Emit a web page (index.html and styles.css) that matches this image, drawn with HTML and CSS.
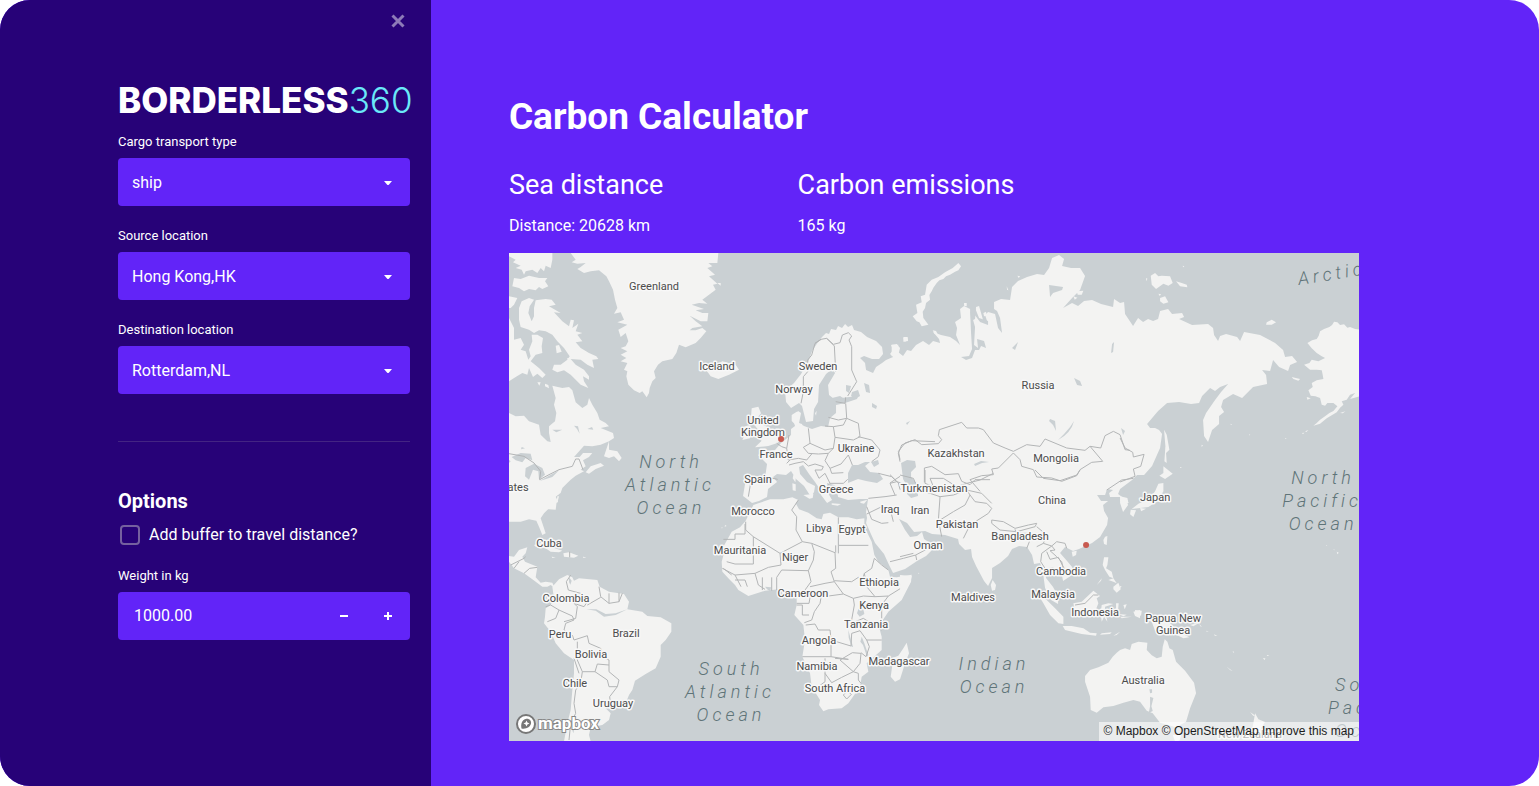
FILE: index.html
```html
<!DOCTYPE html>
<html lang="en">
<head>
<meta charset="utf-8">
<meta name="viewport" content="width=device-width, initial-scale=1">
<title>Carbon Calculator</title>
<link rel="stylesheet" href="styles.css">
</head>
<body>
<div class="app">
  <aside class="sidebar">
    <button class="close" type="button" aria-label="Close sidebar">
      <svg width="14" height="14" viewBox="0 0 14 14"><path d="M1.500 1.500L12.500 12.500M12.500 1.500L1.500 12.500"/></svg>
    </button>
    <div class="logo">BORDERLESS<span class="logo-number">360</span></div>
    <form class="form">
      <div class="field">
        <label for="transport">Cargo transport type</label>
        <div class="select">
          <select id="transport"><option>ship</option></select>
          <svg class="caret" width="8" height="4" viewBox="0 0 8 4"><path d="M0 0H8L5 3.4Q4 4.4 3 3.4Z"/></svg>
        </div>
      </div>
      <div class="field">
        <label for="source">Source location</label>
        <div class="select">
          <select id="source"><option>Hong Kong,HK</option></select>
          <svg class="caret" width="8" height="4" viewBox="0 0 8 4"><path d="M0 0H8L5 3.4Q4 4.4 3 3.4Z"/></svg>
        </div>
      </div>
      <div class="field">
        <label for="destination">Destination location</label>
        <div class="select">
          <select id="destination"><option>Rotterdam,NL</option></select>
          <svg class="caret" width="8" height="4" viewBox="0 0 8 4"><path d="M0 0H8L5 3.4Q4 4.4 3 3.4Z"/></svg>
        </div>
      </div>
      <hr class="divider">
      <h2 class="options-title">Options</h2>
      <div class="check">
        <input type="checkbox" id="buffer">
        <label for="buffer">Add buffer to travel distance?</label>
      </div>
      <div class="field">
        <label for="weight">Weight in kg</label>
        <div class="number">
          <input type="number" id="weight" value="1000.00" step="0.01">
          <button type="button" aria-label="Decrease"><svg width="8" height="8" viewBox="0 0 8 8"><path d="M0 4H8"/></svg></button>
          <button type="button" aria-label="Increase"><svg width="8" height="8" viewBox="0 0 8 8"><path d="M0 4H8M4 0V8"/></svg></button>
        </div>
      </div>
    </form>
  </aside>

  <main class="main">
    <h1 class="title">Carbon Calculator</h1>
    <div class="metrics">
      <section><h2>Sea distance</h2><p>Distance: 20628 km</p></section>
      <section><h2>Carbon emissions</h2><p>165 kg</p></section>
    </div>
    <div class="map">
      <svg class="world" viewBox="0 0 850 488" role="img" aria-label="World map with the ports of Rotterdam and Hong Kong">
        <!-- Eurasia and Arabia -->
        <path class="land" d="M313 84L317 80 320 81 322 76 327 77 329 73 333 75 336 71 339 74 343 72 345 77 352 79 358 84 367 88 373 94 374 101 370 106 363 106 355 103 351 105 356 110 357 117 364 120 367 114 373 110 377 107 384 104 381 101 384 97 382 92 388 91 389 99 394 103 398 97 402 98 407 92 414 88 420 92 424 88 431 90 430 86 424 79 432 82 441 84 447 88 451 92 447 82 448 75 446 69 452 65 451 56 455 53 461 56 462 68 466 66 467 54 470 53 474 67 479 71 476 62 479 59 486 61 489 75 493 80 491 65 488 58 485 56 485 49 492 46 501 47 503 34 509 28 518 24 528 21 535 22 540 15 543 5 550 2 555 6 553 13 562 15 571 15 576 23 571 37 563 45 554 55 563 50 569 53 575 48 583 47 592 51 604 54 605 46 611 50 615 49 616 61 624 73 629 65 634 69 639 66 644 68 649 66 651 58 659 56 663 61 673 60 675 64 670 66 683 72 699 71 704 75 705 82 709 88 711 83 717 81 728 84 731 88 735 79 751 82 766 90 774 97 776 104 783 103 788 109 781 112 779 118 770 114 764 107 761 118 753 117 757 122 758 131 744 134 733 145 724 141 714 147 712 154 715 159 710 163 710 171 703 177 699 189 695 183 694 167 697 160 706 147 712 139 719 131 711 134 706 138 701 135 693 143 690 150 682 151 670 149 658 150 649 158 638 171 641 175 646 175 650 177 653 181 651 195 643 213 635 222 628 222 623 227 611 236 609 241 617 247 619 252 614 259 611 250 611 244 601 244 600 240 604 237 598 236 596 242 588 242 592 248 599 248 594 252 595 258 599 265 598 272 591 284 583 290 570 296 564 298 556 294 551 300 558 308 563 314 563 322 554 328 553 323 547 321 544 314 540 315 536 317 537 325 544 334 549 343 549 351 542 347 536 335 534 320 531 310 525 311 523 302 518 294 510 293 503 296 499 303 491 310 483 315 483 325 479 333 475 328 467 313 463 304 462 296 456 297 450 291 449 286 436 282 423 281 416 278 405 279 398 270 390 266 396 277 401 284 408 283 413 279 415 286 424 292 424 296 417 303 408 308 396 316 384 320 380 312 375 301 366 290 361 279 357 270 358 265 357 259 359 246 351 246 339 247 329 244 328 235 325 232 318 230 319 240 323 247 318 250 312 242 310 235 306 229 300 221 294 212 290 214 291 221 298 229 306 233 305 239 302 244 295 233 287 226 282 218 277 222 268 221 264 224 268 229 259 236 258 244 250 248 243 250 238 246 234 243 237 225 246 223 256 225 258 211 249 202 256 198 266 197 272 190 282 182 282 176 286 173 283 164 289 158 292 160 290 170 295 173 303 176 312 173 319 174 321 165 327 160 327 152 336 150 348 146 349 143 332 145 325 146 320 142 319 132 326 120 323 116 317 121 310 132 309 149 305 156 304 168 297 169 293 153 290 150 282 155 277 149 276 138 285 130 292 121 299 109 303 98 309 89Z"/>
        <g transform="translate(206 237) scale(.3333)">
          <path class="land" d="M92 92L115 45 130 40 165 28 205 28 232 22 250 30 242 40 252 58 280 68 305 85 320 88 325 72 345 68 370 82 400 82 425 88 448 85 448 110 470 155 478 195 490 215 520 240 525 260 545 262 590 254 588 275 560 330 520 365 500 395 492 410 500 440 500 480 455 520 460 545 440 560 435 590 400 640 380 655 340 658 325 664 312 645 315 630 290 590 285 550 262 500 270 450 265 405 238 375 245 345 245 320 225 322 205 300 190 298 150 302 100 318 70 300 60 285 45 270 22 245 20 215 28 185 25 170 50 125 75 112Z"/>
          <path class="land" d="M575 458L582 490 570 520 555 568 540 575 527 560 532 525 530 505 550 497 565 475ZM30 105l5 3-6 2zM20 112l4 2-5 1z"/>
          <path class="water" d="M430 357l14-3 4 18-14 8-8-10zM400 420l8 30 6 20-4 1-9-28zM440 440l8 20 12 35-4 5-12-35-8-10zM150 290l18 2-2 12-10-6z"/>
          <path class="border" d="M250 30L230 60 245 80 243 120 262 155 195 190 115 140 92 120 92 95M60 132H90V102M60 132V148H25M115 140V222H60L35 215M195 190L198 225 160 232 120 250 60 255 22 235M262 155L290 160 298 185 295 210 280 242 200 240 185 262M290 160L360 188 362 235 348 245 358 275 330 280 285 290M370 82V166H460M362 188V166M370 190V166M478 205L470 235 448 250 442 270 430 262 410 275 358 272M478 205L500 225 520 240M448 250L455 290 480 320 520 318 565 290 525 262M520 318L500 345 500 385M358 275L385 312 415 325 445 318 480 320M415 325L418 345 408 400 445 385 500 420M385 312L340 318 318 322 315 340 298 365 290 390 268 398M245 340H282L285 322 270 300 288 275 280 242M245 345L262 345V375L282 375M272 405L300 402 310 420 345 420 348 450 408 468 410 430 435 422 455 450H500M348 450V500L262 500M348 500L400 508 360 505M330 505V575L310 590M330 550L350 578 380 562 415 545 435 520 438 490 412 488 375 510 415 545 430 550 430 570 438 580M385 615l12-12 12 10-14 14zM455 450l8 20-10 30-15-12M120 250L130 285 150 298M142 262V300M170 262V302M185 262V300M60 255L78 290M25 235L50 255M97 290L90 270 60 270M525 215L565 205 602 195 605 210M455 50L470 88 500 100 520 98M455 72L500 50 525 55 535 95M602 195L640 175 655 175"/>
        </g>
        <!-- European and Asian lakes and inland seas -->
        <path class="water" d="M339 220L343 212 349 212 356 209 361 209 356 213 361 219 370 220 374 226 368 230 357 228 349 226 339 230ZM362 209l7-2 1 4-5 3zM392 210L398 207 406 208 407 214 402 219 402 224 408 231 409 243 402 245 398 241 398 233 394 226ZM343 139l6-2 2 6-5 3-4-3zM355 130l5 2 1 8-4-1zM363 150l5 3-1 3-4-2zM337 132l5 1-2 7-3-2zM461 56L466 74 465 92 469 95 468 86 475 88 477 95 472 93 470 97 466 97 463 105 457 107 452 104 460 103 463 96 462 80zM466 55l4 10 9 3 0 4-8-3-6-8zM549 187Q562 180 565 168L561 174 555 181ZM541 166l5 2 1 10-3-6-4-4zM565 125l6 3 2 5-5-1zM503 95l6-6-3 8zM465 211l7-3 8 1-7 1-7 3zM540 32l14 2-1 3-9 3-3 4zM603 91l2-2-1 10-2 1zM612 175l4 3-2 4zM397 170l4-2-3 4zM323 145l8-2 3 2-8 3z"/>
        <g transform="translate(206 57) scale(.3333)">
          <path class="land" d="M110 295L130 290 138 310 128 322 150 325 145 345 165 355 180 375 200 390 185 400 160 408 120 412 140 392 125 385 138 370 118 345 108 320ZM85 350L105 345 110 365 105 385 82 390 90 372ZM235 495l8 2-2 20-8-12zM232 520l10 3v20l-9-2zM265 555l30-3-2 12-10 2zM230 315l15-10 5 8-15 10 5 20-10-10zM250 340l12 2-4 10-8-4zM300 310l5-8-2 15zM350 580l28 2-10 5-18-3zM435 575l22-6-10 12-10-2zM540 112l10-4 5 6-5 20-10 10zM565 85l12-4 2 10-10 4z"/>
          <path class="border" d="M300 100L318 88 335 85 355 103 375 98 382 75 400 68 410 78 402 90 410 110 410 180 425 215 398 258M318 88L300 100 290 135 278 150 278 185 265 200 265 245 258 280M335 85L358 108 362 185M362 275L390 280 392 262M392 280L395 325 370 330 340 322M395 325L430 340 435 380 415 390 360 382 355 350 385 345 395 325M355 350L330 348M360 382L355 415 330 420 285 400 280 355M285 400L265 412 280 430 310 432 340 430 355 415M222 375L215 415 200 410 185 400M215 415L220 450 250 445 275 450 290 432M222 465L240 460 265 455 280 468 300 462 325 470M430 380L470 390 495 420 490 440 470 455M340 430L330 452 345 475 378 462 400 435 412 465M345 475L350 490 385 488M325 470L320 480 300 480 312 505 330 490M330 490L345 520 385 520 398 508M345 520L330 535M490 490L530 500 545 515 525 520 540 555M545 515L560 520M90 505L108 512 100 560M150 500L188 508M230 445L215 460M460 565L510 560 545 555M555 455L550 430 560 405 590 392 660 395"/>
        </g>
        <!-- Central Asia and Siberian islands -->
        <g transform="translate(381 0) scale(.3333)">
          <path class="land" d="M205 30L213 40 205 52 195 56 180 65 168 70 160 78 148 82 140 90 130 104 125 115 118 126 120 140 108 150 105 165 98 176 100 195 115 215 95 220 88 208 80 205 68 190 82 180 78 155 95 148 92 130 105 125 110 95 125 80 145 72 165 58 188 45ZM40 252l12 0 2 12-14 2zM128 232l10 2 5 10-10-2zM222 150l8 0 0 10-8-2zM5 275l20 0-5 30-15 5zM280 180l8-4 2 12-8 2zM382 68l8 2-4 5zM560 115l20-2-5 12-12 0zM550 130l12 4-8 6zM350 100l5 12-4-2z"/>
          <path class="border" d="M30 620L25 595 45 570 75 560 95 575 145 572 155 560 145 548 148 530 215 508 230 525 265 525 280 530 310 570 345 585 370 595M370 595L410 575 450 580 465 558 530 585 585 592 600 580 638 625 605 628 570 650 560 668 515 685 485 675 440 672 430 650 395 640 390 620 370 600 325 645 305 648 310 665 275 668 240 680M600 580L632 585 645 548 670 535 690 545 705 590 720 592M103 688V645L125 640 165 665 205 662 215 685 240 695 255 680 300 680M0 690L30 670M0 665L25 690 30 710M240 680L270 715"/>
        </g>
        <!-- South and Southeast Asia -->
        <g transform="translate(391 217) scale(.3333)">
          <path class="land" d="M278 330L288 345 285 360 276 362 272 345ZM615 200L622 198 620 225 612 222 610 210ZM515 245L530 242 528 255 518 260ZM612 262L625 262 622 285 618 295 635 305 640 325 628 320 615 300 608 285ZM590 345L605 325 603 332ZM625 330L640 325 650 340 640 335ZM640 350L655 338 662 358 650 368 640 358ZM418 380L440 390 465 415 490 440 490 462 475 460 450 435 430 400ZM488 468L515 468 550 475 570 488 590 490 588 497 545 492 495 480ZM520 400L545 395 580 362 600 378 590 385 595 400 585 425 575 440 545 435 525 430ZM605 405L625 400 640 402 615 410 615 425 630 430 618 435 622 455 612 440 605 455 602 430ZM605 490L635 487 630 492 600 494ZM640 497L660 485 650 495ZM648 400l8 0-2 20-6-4zM700 425L720 420V445L705 438ZM655 432l25 2-10 5zM55 308l3 2-3 2zM0 315L35 318 30 340 0 385Z"/>
          <path class="border" d="M405 0L430 25 480 32 530 15 540 0M75 0V40L100 50 90 25 130 25 170 50 200 40 240 30 280 10M55 60L90 70 120 80 115 150 125 200M120 80L160 75 200 60 210 75 195 105 160 125 120 150M210 75L225 95 260 100 275 115 265 130 210 165 190 205M200 60L245 70 275 100M275 150L310 155 345 175 385 165 410 160 405 170 350 185 300 180 275 160ZM345 178L350 195 345 215M410 170L440 195 430 220 410 230M350 190L380 190 388 215 380 235M430 220L455 228 470 215 495 220 500 235M455 228L465 240 450 242 470 260 485 275 490 300M455 228L425 250 422 275 435 295M440 245L450 268 475 262 495 300 480 310M525 405L555 400 580 375 595 375M0 15L40 25 55 60M620 60L665 30 700 25M0 260L40 250"/>
        </g>
        <!-- Northeast Asia, Alaska and the North Pacific -->
        <g transform="translate(611 0) scale(.3333)">
          <path class="land" d="M92 68L105 60 115 70 125 68 150 70 158 90 145 98 130 92 108 108 95 95ZM168 85L185 90 200 95 202 103 180 100ZM120 135L135 130 145 148 130 152 120 145ZM115 122l8 2-4 5zM78 75l4 2-3 8zM440 208L455 200 468 208 455 215 438 215ZM188 38l5 2-4 3zM515 372L540 378 535 383 520 378ZM132 530L140 545 148 590 138 600 140 630 133 625 136 580ZM130 640L158 662 135 678 118 668 130 660ZM115 692L130 690 130 715 112 745 85 762 60 765 35 768 55 752 90 735 105 715ZM32 770l16 2-8 20-10-8zM60 765l18 2-15 8zM0 730L22 735 25 750 5 758ZM245 575l4 3-5 3zM332 512l4 3-4 1zM387 544l4 2-4 1z"/>
          <path class="land" d="M720 230L705 228 690 222 682 224 672 214 660 216 652 208 642 206 636 216 628 222 612 228 600 235 596 248 590 258 576 262 562 270 575 286 590 300 605 310 615 315 595 325 575 320 568 330 552 335 570 350 590 350 605 352 608 366 610 378 590 382 575 390 578 402 565 412 572 428 586 430 600 435 605 455 615 458 622 450 640 450 652 460 640 474 628 480 615 490 600 500 590 510 580 518 600 512 620 496 650 478 660 464 670 455 665 445 680 440 690 425 705 420 690 438 720 430ZM560 432l12 4-10 4zM555 535l10-4-6 6zM545 540l8-1-4 4zM660 480l16-5-8 6zM495 555l5 1-4 2zM180 642l6 1-6 2z"/>
          <path class="border" d="M0 555L15 585 38 598 40 612 72 604 62 640 40 648 45 670 0 687"/>
        </g>
        <!-- Oceania -->
        <g transform="translate(611 247) scale(.3333)">
          <path class="land" d="M0 450L15 445 30 450 35 432 55 425 82 428 80 450 95 466 110 475 125 470 128 440 134 418 142 425 148 445 158 450 168 485 195 512 222 548 228 580 210 625 198 665 168 682 120 668 98 640 80 632 60 605 40 600 10 608-20 618-50 622-70 638-88 630-90 590-105 545-105 528-90 510-65 502-35 488-22 470-10 458ZM158 705L185 702 178 722 165 724ZM405 640l10 18 20 8-15 24-12 30-40-5 30-35zM390 636l14 10-4 2zM80 345L110 350 150 370 175 395 208 412 190 415 150 395 105 392 95 365 75 358ZM45 330l20 2-2 15-18-4zM10 315l10-2-6 15zM0 350l35 0-30 5zM210 375l30-8-20 12zM238 372l8 10-6-4zM320 500l18 14-8-4zM428 475l8 0-2 5zM440 465l8 0-6 3zM650 155l6 3-4 5zM640 148l4 1-2 2zM258 392l8 3-6 0zM282 403l10 5-8-1zM338 454l5 2-4 2zM0 0L22 0 25 8 5 10ZM0 258l4 0-2 8zM618 136l4 2-4 0z"/>
          <path class="water" d="M88 568l8 0 0 10-6 2zM90 590l10 4-6 25 4 14-12 6 4-20z"/>
        </g>
        <!-- North America and Greenland -->
        <g transform="scale(.3333)">
          <path class="land" d="M185 0L200 20 188 28 205 32 230 30 215 42 205 48 225 60 245 55 270 52 292 70 300 85 312 110 318 140 325 165 315 182 335 178 345 200 325 208 355 215 328 230 335 252 350 240 358 265 350 280 335 285 355 295 335 305 352 315 335 325 355 330 345 350 355 355 352 370 358 395 375 412 392 420 400 415 413 433 420 420 422 405 430 385 440 375 435 355 447 335 460 325 490 318 502 300 510 275 530 283 560 270 575 255 592 235 580 225 560 232 542 232 550 225 580 220 560 205 542 188 575 205 595 205 598 180 580 180 560 172 585 168 548 155 570 150 595 152 580 140 600 125 620 110 612 95 625 92 600 70 618 65 595 45 610 40 598 30 625 30 628 0ZM0 0H130V20L125 45 110 38 105 55 95 45 85 60 70 50 50 55 45 65 38 50 20 45 35 38 12 28 20 20 0 10ZM15 75L35 78 60 68 90 75 115 75 108 85 118 100 100 108 90 102 80 112 60 108 45 115 30 105 10 100ZM0 130L25 135 15 155 5 165 0 165ZM625 90h10v8zM598 360L585 345 600 350 590 335 615 340 640 325 680 335 690 350 660 365 628 378 605 370Z"/>
          <path class="land" d="M38 145L60 135 75 140 62 160 58 180 68 205 75 190 75 165 80 142 110 138 128 140 140 155 120 160 155 180 135 178 160 205 180 220 185 200 195 202 190 225 208 212 200 235 220 240 205 245 220 265 200 268 215 285 240 300 262 310 268 318 250 320 255 345 235 335 215 320 185 318 200 335 225 350 240 370 240 380 222 370 225 385 238 405 215 395 200 380 185 365 165 352 145 358 130 350 135 335 155 335 175 320 182 310 165 285 145 265 130 245 110 235 90 232 75 240 60 230 35 222 30 200 30 165ZM0 195L15 225 15 260 35 255 45 275 35 290 50 295 58 320 65 310 60 290 70 265 68 245 85 245 102 255 98 280 100 300 80 305 65 325 90 345 110 365 100 375 85 362 72 372 60 345 55 365 40 360 20 372 0 385ZM140 278l10-2 8 20-15 5zM175 315l8 0 2 10-10 2zM85 388l10 0-4 10zM108 392l10 4 2 10-12-6z"/>
          <path class="land" d="M130 398L160 405 180 402 190 412 195 430 200 448 220 465 235 455 240 435 250 455 265 480 272 500 290 510 300 520 275 525 312 540 315 555 300 565 275 575 250 580 225 578 195 612 212 612 222 600 250 600 240 612 222 622 230 640 215 650 225 655 200 668 185 680 175 690 160 705 155 720 140 730 145 750 150 730H145L140 770 0 760V480L20 490 45 488 60 505 90 515 95 545 115 565 125 567 120 540 120 520 138 505 142 480 135 455 140 435ZM300 565L300 590 325 595 338 615 330 625 315 610 300 615 285 610 290 595ZM230 658L245 640 275 630 285 638 260 648 240 662Z"/>
          <path class="water" d="M8 612L35 600 65 602 70 622 50 615 40 628 20 622ZM50 645L75 632 100 645 108 665 90 680 88 655 72 650 60 680 48 670ZM92 684L120 668 150 652 130 672ZM38 582l10 4-12 3zM130 530l30 0-18 8zM195 518l12 2 5 22-8-14zM235 528l14-6 4 8zM0 620l5 5-5 5z"/>
          <path class="border" d="M0 602L45 610 75 630 95 655 92 680 120 665 150 650 190 640 200 618 210 618 222 650"/>
        </g>
        <!-- Central and South America -->
        <g transform="translate(0 237) scale(.3333)">
          <path class="land" d="M0 -20H145L150 12 140 20 147 35 125 50 105 70 95 85 105 115 110 130 100 135 90 110 82 92 60 88 35 95 0 95ZM0 198L15 200 30 180 55 172 50 190 40 200 48 215 85 230 80 262 95 278 110 275 130 278 138 295 125 285 115 290 100 290 70 268 45 250 15 235 0 215ZM75 165L100 158 130 172 160 182 150 187 125 185 110 175 80 170ZM163 190L180 187 208 197 195 203 165 200ZM128 200l12 2-10 2zM222 200l10 2-9 2z"/>
          <path class="land" d="M130 290L150 268 175 255 190 262 195 272 210 265 265 270 272 290 300 305 345 312 360 335 355 358 400 365 415 378 455 382 487 400 487 425 470 450 455 465 455 500 440 535 410 552 378 572 370 600 360 615 350 640 335 655 300 650 290 655 305 670 300 690 280 705 245 712 240 735 245 754H165L175 700 185 660 190 600 195 550 195 510 165 490 140 460 125 425 105 400 108 380 110 355 125 345 135 325Z"/>
          <path class="water" d="M180 262l8 10-4 12-4-8zM232 358L260 362 285 380 320 375 355 358 320 370 290 372 262 358zM258 202l3 1-2 1zM188 715l8 0-3 15z"/>
          <path class="border" d="M185 255L172 275 178 300 215 310 235 335 225 350 195 340 205 350 200 385 165 395M110 350L125 345 150 360 140 385 115 395M150 360L190 378 195 390 170 400 165 420 185 435M270 290L275 320 300 340 330 335 340 310M300 310L300 340M330 308L330 335M235 345L275 322M190 435L195 450 235 437 240 460 275 475 280 500 300 510V525L265 522 258 545 220 545 205 510 205 455M258 545L295 570 300 590 325 590 330 570 300 545 300 525M325 590L302 620 305 650M220 545L215 580 200 600 195 640 200 670 185 700 180 750M5 225L45 205 50 200M15 235L30 215M45 250L62 235 85 232M195 505L210 550M182 185V202"/>
        </g>

        <g class="country">
          <text x="145" y="37">Greenland</text><text x="208" y="117">Iceland</text>
          <text x="309" y="117">Sweden</text><text x="285" y="140">Norway</text>
          <text x="254" y="171">United</text><text x="254" y="183">Kingdom</text>
          <text x="267" y="205">France</text><text x="347" y="199">Ukraine</text>
          <text x="249" y="230">Spain</text><text x="327" y="240">Greece</text>
          <text x="447" y="204">Kazakhstan</text><text x="425" y="239">Turkmenistan</text>
          <text x="529" y="136">Russia</text><text x="547" y="209">Mongolia</text>
          <text x="543" y="251">China</text><text x="646" y="248">Japan</text>
          <text x="9" y="238">ates</text><text x="40" y="294">Cuba</text>
          <text x="244" y="262">Morocco</text><text x="310" y="279">Libya</text>
          <text x="343" y="280">Egypt</text><text x="381" y="260">Iraq</text>
          <text x="411" y="261">Iran</text><text x="448" y="275">Pakistan</text>
          <text x="511" y="287">Bangladesh</text><text x="231" y="301">Mauritania</text>
          <text x="286" y="308">Niger</text><text x="419" y="296">Oman</text>
          <text x="552" y="322">Cambodia</text><text x="544" y="345">Malaysia</text>
          <text x="464" y="348">Maldives</text><text x="370" y="333">Ethiopia</text>
          <text x="294" y="344">Cameroon</text><text x="365" y="356">Kenya</text>
          <text x="357" y="375">Tanzania</text><text x="310" y="391">Angola</text>
          <text x="308" y="417">Namibia</text><text x="390" y="412">Madagascar</text>
          <text x="326" y="439">South Africa</text><text x="586" y="363">Indonesia</text>
          <text x="664" y="369">Papua New</text><text x="664" y="381">Guinea</text>
          <text x="634" y="431">Australia</text><text x="57" y="349">Colombia</text>
          <text x="51" y="385">Peru</text><text x="117" y="384">Brazil</text>
          <text x="82" y="405">Bolivia</text><text x="66" y="434">Chile</text>
          <text x="104" y="454">Uruguay</text><text x="741" y="485">New Zealand</text>
        </g>
        <g class="ocean">
          <text x="162" y="215">North</text><text x="161" y="238">Atlantic</text><text x="162" y="261">Ocean</text>
          <text x="222" y="422">South</text><text x="221" y="445">Atlantic</text><text x="222" y="468">Ocean</text>
          <text x="485" y="417">Indian</text><text x="485" y="440">Ocean</text>
          <text x="814" y="231">North</text><text x="813" y="254">Pacific</text><text x="814" y="277">Ocean</text>
          <text class="edge" x="826" y="438">South</text><text class="edge" x="819" y="461">Pacific</text><text class="edge" x="826" y="484">Ocean</text>
          <text class="edge" x="790" y="32" transform="rotate(-9 790 32)">Arctic</text>
        </g>
        <g class="port"><circle cx="272" cy="186" r="3"/><circle cx="577" cy="292" r="3"/></g>
      </svg>
      <a class="mapbox" href="#mapbox" aria-label="Mapbox">
        <svg width="88" height="24" viewBox="0 0 88 24">
          <circle cx="11" cy="12" r="9" class="mb-ring"/>
          <path class="mb-mark" d="M6.500 16.500C5.500 12 7 8 10.500 7C14 6 16.500 8.500 16 11.500C15.400 15 11 17.500 6.500 16.500Z"/>
          <path class="mb-star" d="M11.500 8.500L12.400 10.600 14.500 11.500 12.400 12.400 11.500 14.500 10.600 12.400 8.500 11.500 10.600 10.600Z"/>
          <text x="23" y="17">mapbox</text>
        </svg>
      </a>
      <div class="attribution"><a href="#mapbox">© Mapbox</a> <a href="#osm">© OpenStreetMap</a> <a href="#improve">Improve this map</a></div>
    </div>
  </main>
</div>
</body>
</html>
```
FILE: styles.css
```css
* { box-sizing: border-box; }

body {
  margin: 0;
  background: #fff;
  color: #fff;
  font-family: Roboto, "Noto Sans", sans-serif;
  font-size: 16px;
  line-height: 24px;
}

h1, h2, p { margin: 0; }

.app {
  display: grid;
  grid-template-columns: minmax(0, 28fr) minmax(0, 72fr);
  min-height: 100vh;
  border-radius: 30px;
  overflow: hidden;
  background: #6224f8;
}

.sidebar {
  display: flex;
  flex-direction: column;
  padding: 12px 21px 24px 118px;
  background: #270278;
}

.close {
  align-self: flex-end;
  display: flex;
  margin-right: 3px;
  padding: 2px;
  border: 0;
  background: none;
}
.close path { stroke: #8d7bb8; stroke-width: 3; fill: none; }

.logo {
  margin-top: 50px;
  font-family: Inter, sans-serif;
  font-size: 35px;
  font-weight: 800;
  line-height: 40px;
  white-space: nowrap;
}
.logo-number { color: #6ae8f8; font-weight: 300; }

.form { display: flex; flex-direction: column; margin-top: 12px; }

.field { display: flex; flex-direction: column; gap: 6px; margin-bottom: 20px; }
.field label { font-size: 13px; line-height: 20px; }

.select { position: relative; }
.select select {
  display: block;
  width: 100%;
  height: 48px;
  padding: 1px 14px 0;
  border: 0;
  border-radius: 4px;
  appearance: none;
  background: #6224f8;
  color: #fff;
  font: inherit;
}
.caret { position: absolute; right: 18px; top: 23px; fill: #fff; pointer-events: none; }

.divider {
  width: 100%;
  height: 1px;
  margin: 27px 0 46px;
  border: 0;
  background: #432483;
}

.options-title { font-size: 20px; line-height: 26px; font-weight: 700; }

.check { display: flex; align-items: center; gap: 9px; margin: 9px 0 19px 2px; }
.check input {
  width: 20px;
  height: 20px;
  margin: 0;
  border: 2px solid #75619f;
  border-radius: 4px;
  appearance: none;
}

.number { display: flex; height: 48px; border-radius: 4px; background: #6224f8; overflow: hidden; }
.number input {
  flex: 1;
  min-width: 0;
  padding: 0 16px;
  border: 0;
  appearance: textfield;
  background: none;
  color: #fff;
  font: inherit;
}
.number input::-webkit-inner-spin-button { appearance: none; margin: 0; }
.number button {
  display: grid;
  place-items: center;
  width: 44px;
  padding: 0;
  border: 0;
  background: none;
}
.number path { stroke: #fff; stroke-width: 2; }

.main { padding: 93px 180px 44px 78px; }

.title { font-size: 37px; line-height: 48px; font-weight: 700; }

.metrics {
  display: grid;
  grid-template-columns: repeat(3, 1fr);
  gap: 16px;
  margin-top: 24px;
}
.metrics h2 { font-size: 27px; line-height: 40px; font-weight: 400; white-space: nowrap; }
.metrics p { margin-top: 9px; }

.map { position: relative; margin-top: 15px; background: #cad0d3; }
.world { display: block; width: 100%; height: auto; }

.land { fill: #f3f3f2; }
.water { fill: #cad0d3; }
.border { fill: none; stroke: #b3b5b6; stroke-width: 3; stroke-linejoin: round; }

.country {
  fill: #4c4c4c;
  stroke: #f8f8f8;
  stroke-width: 3;
  stroke-linejoin: round;
  paint-order: stroke;
  font-size: 11px;
  text-anchor: middle;
}
.ocean {
  fill: #5f7478;
  font-size: 18px;
  font-style: italic;
  font-weight: 300;
  letter-spacing: 4px;
  text-anchor: middle;
}
.ocean .edge { text-anchor: start; }
.port { fill: #c85a50; }

.mapbox { position: absolute; left: 6px; bottom: 5px; display: flex; }
.mb-ring { fill: #fff; stroke: #777; stroke-width: 2; }
.mb-mark { fill: #777; }
.mb-star { fill: #fff; }
.mapbox text {
  fill: #fff;
  stroke: #888;
  stroke-width: 2;
  paint-order: stroke;
  font-size: 17px;
  font-weight: 700;
}

.attribution {
  position: absolute;
  right: 0;
  bottom: 0;
  padding: 0 5px;
  background: rgba(255, 255, 255, .6);
  font: 12px/19px "Liberation Sans", Arial, sans-serif;
}
.attribution a { color: #1c1c1c; text-decoration: none; }
```
